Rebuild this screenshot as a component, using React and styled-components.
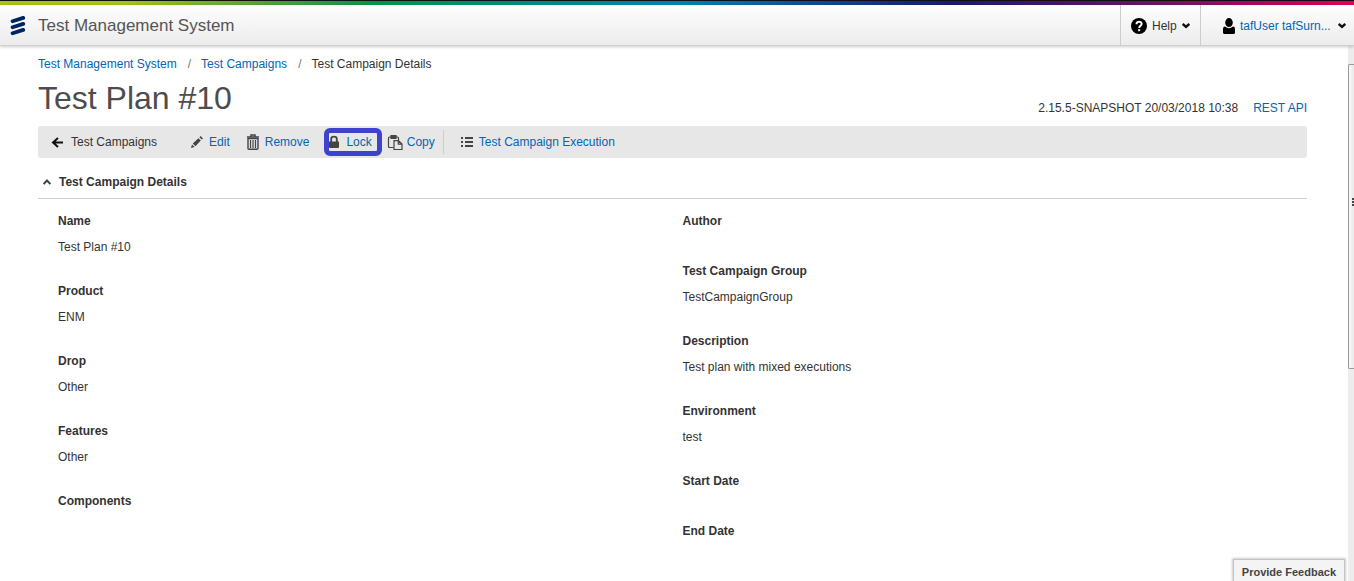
import React from "react";
import styled, { createGlobalStyle } from "styled-components";

const GlobalStyle = createGlobalStyle`
  * { box-sizing: border-box; }
  body {
    margin: 0;
    background: #fff;
    color: #333;
    font: 12px/20px "Liberation Sans", Arial, sans-serif;
  }
  a { color: #0066b3; text-decoration: none; }
  h1, h2, dl, dt, dd, ol { margin: 0; padding: 0; font-weight: normal; }
  button { font: inherit; color: inherit; background: none; border: 0; padding: 0; cursor: pointer; }
  svg { display: block; flex: none; }
`;

const Page = styled.div`
  display: flex;
  flex-direction: column;
  height: 100vh;
  overflow: hidden;
  position: relative;
`;

const BrandStripe = styled.div`
  flex: none;
  height: 5px;
  border-top: 1px solid #111;
  background: linear-gradient(
    to right,
    #a9c317 0%, #a5c41a 9%, #55a532 19%, #00944a 28%,
    #0082bb 50%, #16197a 70%, #6b1265 85%, #dc0058 99%
  );
`;

const Header = styled.header`
  flex: none;
  display: flex;
  align-items: stretch;
  height: 41px;
  padding-left: 10px;
  border-bottom: 1px solid #cfcfcf;
  background: linear-gradient(#fefefe, #ececec);
  box-shadow: 0 1px 3px rgba(0, 0, 0, 0.2);
  z-index: 1;
`;

const Brand = styled.div`
  flex: 1;
  display: flex;
  align-items: center;
  gap: 12px;
  padding-top: 1px;
  color: #555;
  font-size: 17px;
`;

const HeaderItem = styled.button`
  display: flex;
  align-items: center;
  gap: 5px;
  min-width: ${(p) => (p.$wide ? "154px" : "80px")};
  padding: ${(p) => (p.$wide ? "2px 8px 0 22px" : "2px 10px 0")};
  border-left: 1px solid #ccc;
  color: ${(p) => (p.$wide ? "#0066b3" : "#333")};
  & > svg:last-child { margin-left: auto; }
`;

const Body = styled.div`
  flex: 1;
  display: flex;
  min-height: 0;
`;

const Content = styled.main`
  flex: 1;
  min-width: 0;
  padding: 8px 41px 0 38px;
`;

const ScrollTrack = styled.div`
  flex: none;
  width: 6px;
  padding-top: 18px;
  background: #ededed;
`;

const ScrollThumb = styled.div`
  display: flex;
  align-items: center;
  justify-content: flex-end;
  height: 59%;
  padding-bottom: 30px;
  border: 1px solid #999;
  border-right: 0;
  border-radius: 2px 0 0 2px;
  background: linear-gradient(to right, #fafafa, #e8e8e8);
`;

const Breadcrumb = styled.ol`
  display: flex;
  list-style: none;
  li + li::before { content: "/"; color: #777; margin: 0 10px 0 11px; }
`;

const TitleRow = styled.div`
  display: flex;
  justify-content: space-between;
  align-items: flex-end;
  height: 52px;
`;

const Title = styled.h1`
  align-self: flex-start;
  color: #4d4d4d;
  font-size: 32px;
  line-height: 48px;
`;

const Version = styled.div`
  display: flex;
  gap: 15px;
  padding-bottom: 8px;
`;

const Toolbar = styled.nav`
  display: flex;
  align-items: center;
  gap: 15px;
  height: 32px;
  padding-left: 13px;
  border-radius: 3px;
  background: #e7e7e7;
`;

const ToolButton = styled.button`
  position: relative;
  display: flex;
  align-items: center;
  gap: 4px;
  color: ${(p) => (p.$plain ? "#333" : "#0066b3")};
  margin-right: ${(p) => p.$after || 0};
`;

const Ring = styled.span`
  position: absolute;
  inset: -4px -10px -4px -2px;
  border: 5px solid #3f43cc;
  border-radius: 6px;
`;

const Separator = styled.span`
  width: 1px;
  height: 24px;
  margin-left: -7px;
  background: #ccc;
`;

const SectionHeader = styled.h2`
  margin-top: 10px;
  height: 31px;
  border-bottom: 1px solid #ccc;
  font-size: 12px;
`;

const SectionToggle = styled.button`
  display: flex;
  align-items: center;
  gap: 8px;
  height: 28px;
  padding-left: 5px;
  font-weight: bold;
`;

const Details = styled.div`
  display: grid;
  grid-template-columns: 1fr 1fr;
  padding: 12px 0 0 20px;
`;

const Field = styled.div`
  padding-bottom: 24px;
  dt { font-weight: bold; }
  dd { padding-top: 6px; }
`;

const Feedback = styled.button`
  position: absolute;
  right: 9px;
  bottom: 0;
  height: 22px;
  padding: 3px 8px 0;
  border: 1px solid #c4c4c4;
  border-width: 1px 1px 0;
  background: #f4f4f4;
  box-shadow: 0 0 2px 1px rgba(0, 0, 0, 0.2);
  color: #444;
  font-size: 11px;
  font-weight: bold;
  line-height: 18px;
  z-index: 2;
`;

const Logo = () => (
  <svg width="16" height="20" viewBox="0 0 16 20" stroke="#002561" strokeWidth="3.8" strokeLinecap="round">
    <path d="M2.6 5.2 13.2 1.9M2.6 11.2 13.2 7.9M2.6 17.2 13.2 13.9" />
  </svg>
);

const Chevron = () => (
  <svg width="8" height="6" viewBox="0 0 8 6" fill="none" stroke="#111" strokeWidth="2.4">
    <path d="m0.7 1 3.3 3 3.3-3" />
  </svg>
);

const HelpIcon = () => (
  <svg width="16" height="16" viewBox="0 0 16 16">
    <circle cx="8" cy="8" r="8" fill="#000" />
    <path d="M5.5 6.2C5.5 3 10.7 3 10.6 6 10.6 7.8 8.2 7.9 8.2 10" fill="none" stroke="#fff" strokeWidth="2" />
    <path d="M7.1 11.2h2.1v2H7.1z" fill="#fff" />
  </svg>
);

const UserIcon = () => (
  <svg width="12" height="16" viewBox="0 0 12 16">
    <ellipse cx="6" cy="4.6" rx="3.8" ry="4.5" fill="#000" />
    <path d="M0 11Q0 8.6 2 8.6 6 12 10 8.6 12 8.6 12 11V14.5Q12 16 10.5 16h-9Q0 16 0 14.5z" fill="#000" />
  </svg>
);

const icons = {
  back: (
    <path d="M7 4 2 8.5 7 13M2 8.5h10" fill="none" stroke="#111" strokeWidth="2" />
  ),
  edit: (
    <path d="m2 14 1-3.6 2.6 2.6zM3.8 9.6 9.4 4.2l2.4 2.4L6.4 12.2zM10.4 3.2l1.2-1.2 2.4 2.4-1.2 1.2z" fill="#444" />
  ),
  remove: (
    <g fill="none" stroke="#444">
      <path d="M2 3h12M6 2.5V1h4v1.5" strokeWidth="1.5" />
      <path d="M3 4.5h10V14.2q0 1-1 1H4q-1 0-1-1z" strokeWidth="1.4" />
      <path d="M5.5 6v8M8 6v8M10.5 6v8" strokeWidth="1.2" />
    </g>
  ),
  lock: (
    <>
      <path d="M5.2 8V5Q5.2 2.7 8 2.7T10.8 5v3" fill="none" stroke="#444" strokeWidth="1.8" />
      <path d="M3 7.5h10V13q0 1-1 1H4q-1 0-1-1z" fill="#444" />
    </>
  ),
  copy: (
    <g fill="none" stroke="#444" strokeWidth="1.2">
      <path d="M6.5 13.5h-4q-1 0-1-1V4q0-1 1-1H4M9 3h1.5q1 0 1 1v2" />
      <path d="M4 1.5h5v3H4z" fill="#444" />
      <path d="M7 6.7h4.5L15 10v5.5H7zM11.3 7v3.2h3.5" />
    </g>
  ),
  list: (
    <path d="M2 3h2v2H2zM6 3h8v2H6zM2 7h2v2H2zM6 7h8v2H6zM2 11h2v2H2zM6 11h8v2H6z" fill="#444" />
  ),
};

const Tool = ({ icon, children, ...rest }) => (
  <ToolButton type="button" {...rest}>
    <svg width="16" height="16" viewBox="0 0 16 16">{icons[icon]}</svg>
    {children}
  </ToolButton>
);

const leftFields = [
  ["Name", "Test Plan #10"],
  ["Product", "ENM"],
  ["Drop", "Other"],
  ["Features", "Other"],
  ["Components", ""],
];

const rightFields = [
  ["Author", ""],
  ["Test Campaign Group", "TestCampaignGroup"],
  ["Description", "Test plan with mixed executions"],
  ["Environment", "test"],
  ["Start Date", ""],
  ["End Date", ""],
];

const FieldList = ({ fields }) => (
  <dl>
    {fields.map(([label, value]) => (
      <Field key={label}>
        <dt>{label}</dt>
        <dd>{value}</dd>
      </Field>
    ))}
  </dl>
);

export default function App() {
  return (
    <Page>
      <GlobalStyle />
      <BrandStripe />
      <Header>
        <Brand><Logo />Test Management System</Brand>
        <HeaderItem type="button"><HelpIcon />Help<Chevron /></HeaderItem>
        <HeaderItem type="button" $wide><UserIcon />tafUser tafSurn...<Chevron /></HeaderItem>
      </Header>
      <Body>
        <Content>
          <Breadcrumb>
            <li><a href="#home">Test Management System</a></li>
            <li><a href="#campaigns">Test Campaigns</a></li>
            <li>Test Campaign Details</li>
          </Breadcrumb>
          <TitleRow>
            <Title>Test Plan #10</Title>
            <Version>
              <span>2.15.5-SNAPSHOT 20/03/2018 10:38</span>
              <a href="#api">REST API</a>
            </Version>
          </TitleRow>
          <Toolbar>
            <Tool icon="back" $plain $after="17px">Test Campaigns</Tool>
            <Tool icon="edit">Edit</Tool>
            <Tool icon="remove" $after="2px">Remove</Tool>
            <Tool icon="lock">Lock<Ring /></Tool>
            <Tool icon="copy">Copy</Tool>
            <Separator />
            <Tool icon="list">Test Campaign Execution</Tool>
          </Toolbar>
          <SectionHeader>
            <SectionToggle type="button" aria-expanded="true">
              <svg width="8" height="6" viewBox="0 0 8 6" fill="none" stroke="#444" strokeWidth="2">
                <path d="m0.6 5 3.4-3.5L7.4 5" />
              </svg>
              Test Campaign Details
            </SectionToggle>
          </SectionHeader>
          <Details>
            <FieldList fields={leftFields} />
            <FieldList fields={rightFields} />
          </Details>
        </Content>
        <ScrollTrack>
          <ScrollThumb>
            <svg width="2" height="8" viewBox="0 0 2 8">
              <path d="M0 0h2v2H0zM0 3h2v2H0zM0 6h2v2H0z" fill="#444" />
            </svg>
          </ScrollThumb>
        </ScrollTrack>
      </Body>
      <Feedback type="button">Provide Feedback</Feedback>
    </Page>
  );
}
